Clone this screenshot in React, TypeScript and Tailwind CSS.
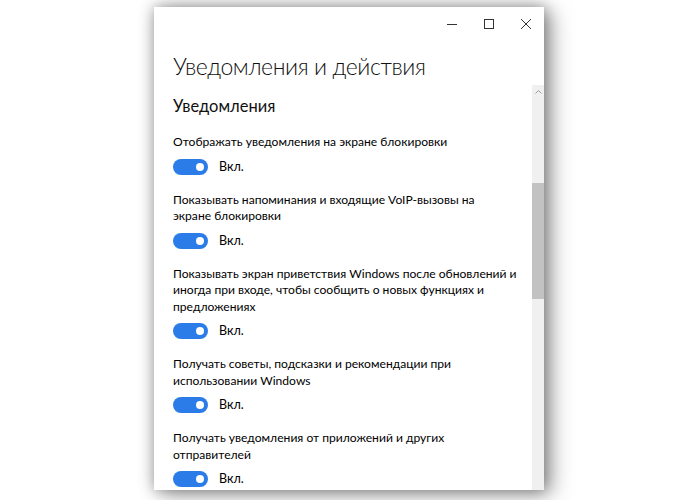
import React from "react";

type Setting = {
  lines: string[];
  on: boolean;
};

const settings: Setting[] = [
  { lines: ["Отображать уведомления на экране блокировки"], on: true },
  {
    lines: ["Показывать напоминания и входящие VoIP-вызовы на", "экране блокировки"],
    on: true,
  },
  {
    lines: [
      "Показывать экран приветствия Windows после обновлений и",
      "иногда при входе, чтобы сообщить о новых функциях и",
      "предложениях",
    ],
    on: true,
  },
  {
    lines: ["Получать советы, подсказки и рекомендации при", "использовании Windows"],
    on: true,
  },
  {
    lines: ["Получать уведомления от приложений и других", "отправителей"],
    on: true,
  },
];

const font = { fontFamily: 'Lato, "Noto Sans", sans-serif' };

const Toggle = ({ on }: { on: boolean }) => (
  <div className="flex items-center mt-2">
    <div
      className={
        on
          ? "relative w-[35px] h-[16px] rounded-full bg-[#2b7ce9]"
          : "relative w-[35px] h-[16px] rounded-full border-2 border-black"
      }
    >
      <div className="absolute right-[4px] top-[4px] w-[8px] h-[8px] rounded-full bg-white" />
    </div>
    <span className="ml-[11px] text-[12.5px] leading-[16px] text-black">Вкл.</span>
  </div>
);

const App = () => {
  return (
    <div className="w-[700px] h-[500px] bg-white overflow-hidden" style={font}>
      <div className="ml-[154px] mt-[7px] w-[390px] h-[483px] bg-white flex flex-col overflow-hidden shadow-[0_0_14px_rgba(0,0,0,0.35),8px_4px_20px_rgba(0,0,0,0.35)]">
        {/* Заголовок окна */}
        <div className="h-[33px] flex justify-end shrink-0">
          <button className="w-[37px] h-full flex items-center justify-center">
            <svg width="10" height="10" viewBox="0 0 10 10">
              <path d="M0 5.5h10" stroke="#333" strokeWidth="1" />
            </svg>
          </button>
          <button className="w-[37px] h-full flex items-center justify-center">
            <svg width="10" height="10" viewBox="0 0 10 10">
              <rect x="0.5" y="0.5" width="9" height="9" fill="none" stroke="#333" strokeWidth="1" />
            </svg>
          </button>
          <button className="w-[37px] h-full flex items-center justify-center">
            <svg width="10" height="10" viewBox="0 0 10 10">
              <path d="M0 0L10 10M10 0L0 10" stroke="#333" strokeWidth="1" />
            </svg>
          </button>
        </div>

        <div className="flex flex-1 min-h-0">
          {/* Содержимое */}
          <div className="flex-1 min-w-0 overflow-hidden pl-[19px] text-black">
            <h1 className="mt-[10px] text-[23px] leading-[32px] tracking-[-0.4px] font-light text-[#111] whitespace-nowrap">
              Уведомления и действия
            </h1>
            <h2 className="mt-[12px] text-[16.5px] leading-[24px] text-[#111]">Уведомления</h2>

            <div className="mt-[16px] flex flex-col gap-[17px]">
              {settings.map((s, i) => (
                <div key={i}>
                  <div className="text-[12.1px] leading-[16.5px] whitespace-nowrap">
                    {s.lines.map((line, j) => (
                      <div key={j}>{line}</div>
                    ))}
                  </div>
                  <Toggle on={s.on} />
                </div>
              ))}
            </div>
          </div>

          {/* Полоса прокрутки */}
          <div className="w-[12px] mt-[45px] bg-[#f0f0f0] flex flex-col shrink-0">
            <div className="h-[13px] flex items-center justify-center">
              <svg width="7" height="4" viewBox="0 0 7 4">
                <path d="M0.5 3.5L3.5 0.5L6.5 3.5" fill="none" stroke="#9a9a9a" strokeWidth="1" />
              </svg>
            </div>
            <div className="mt-[85px] h-[116px] bg-[#c2c2c2]" />
          </div>
        </div>
      </div>
    </div>
  );
};

export default App;
